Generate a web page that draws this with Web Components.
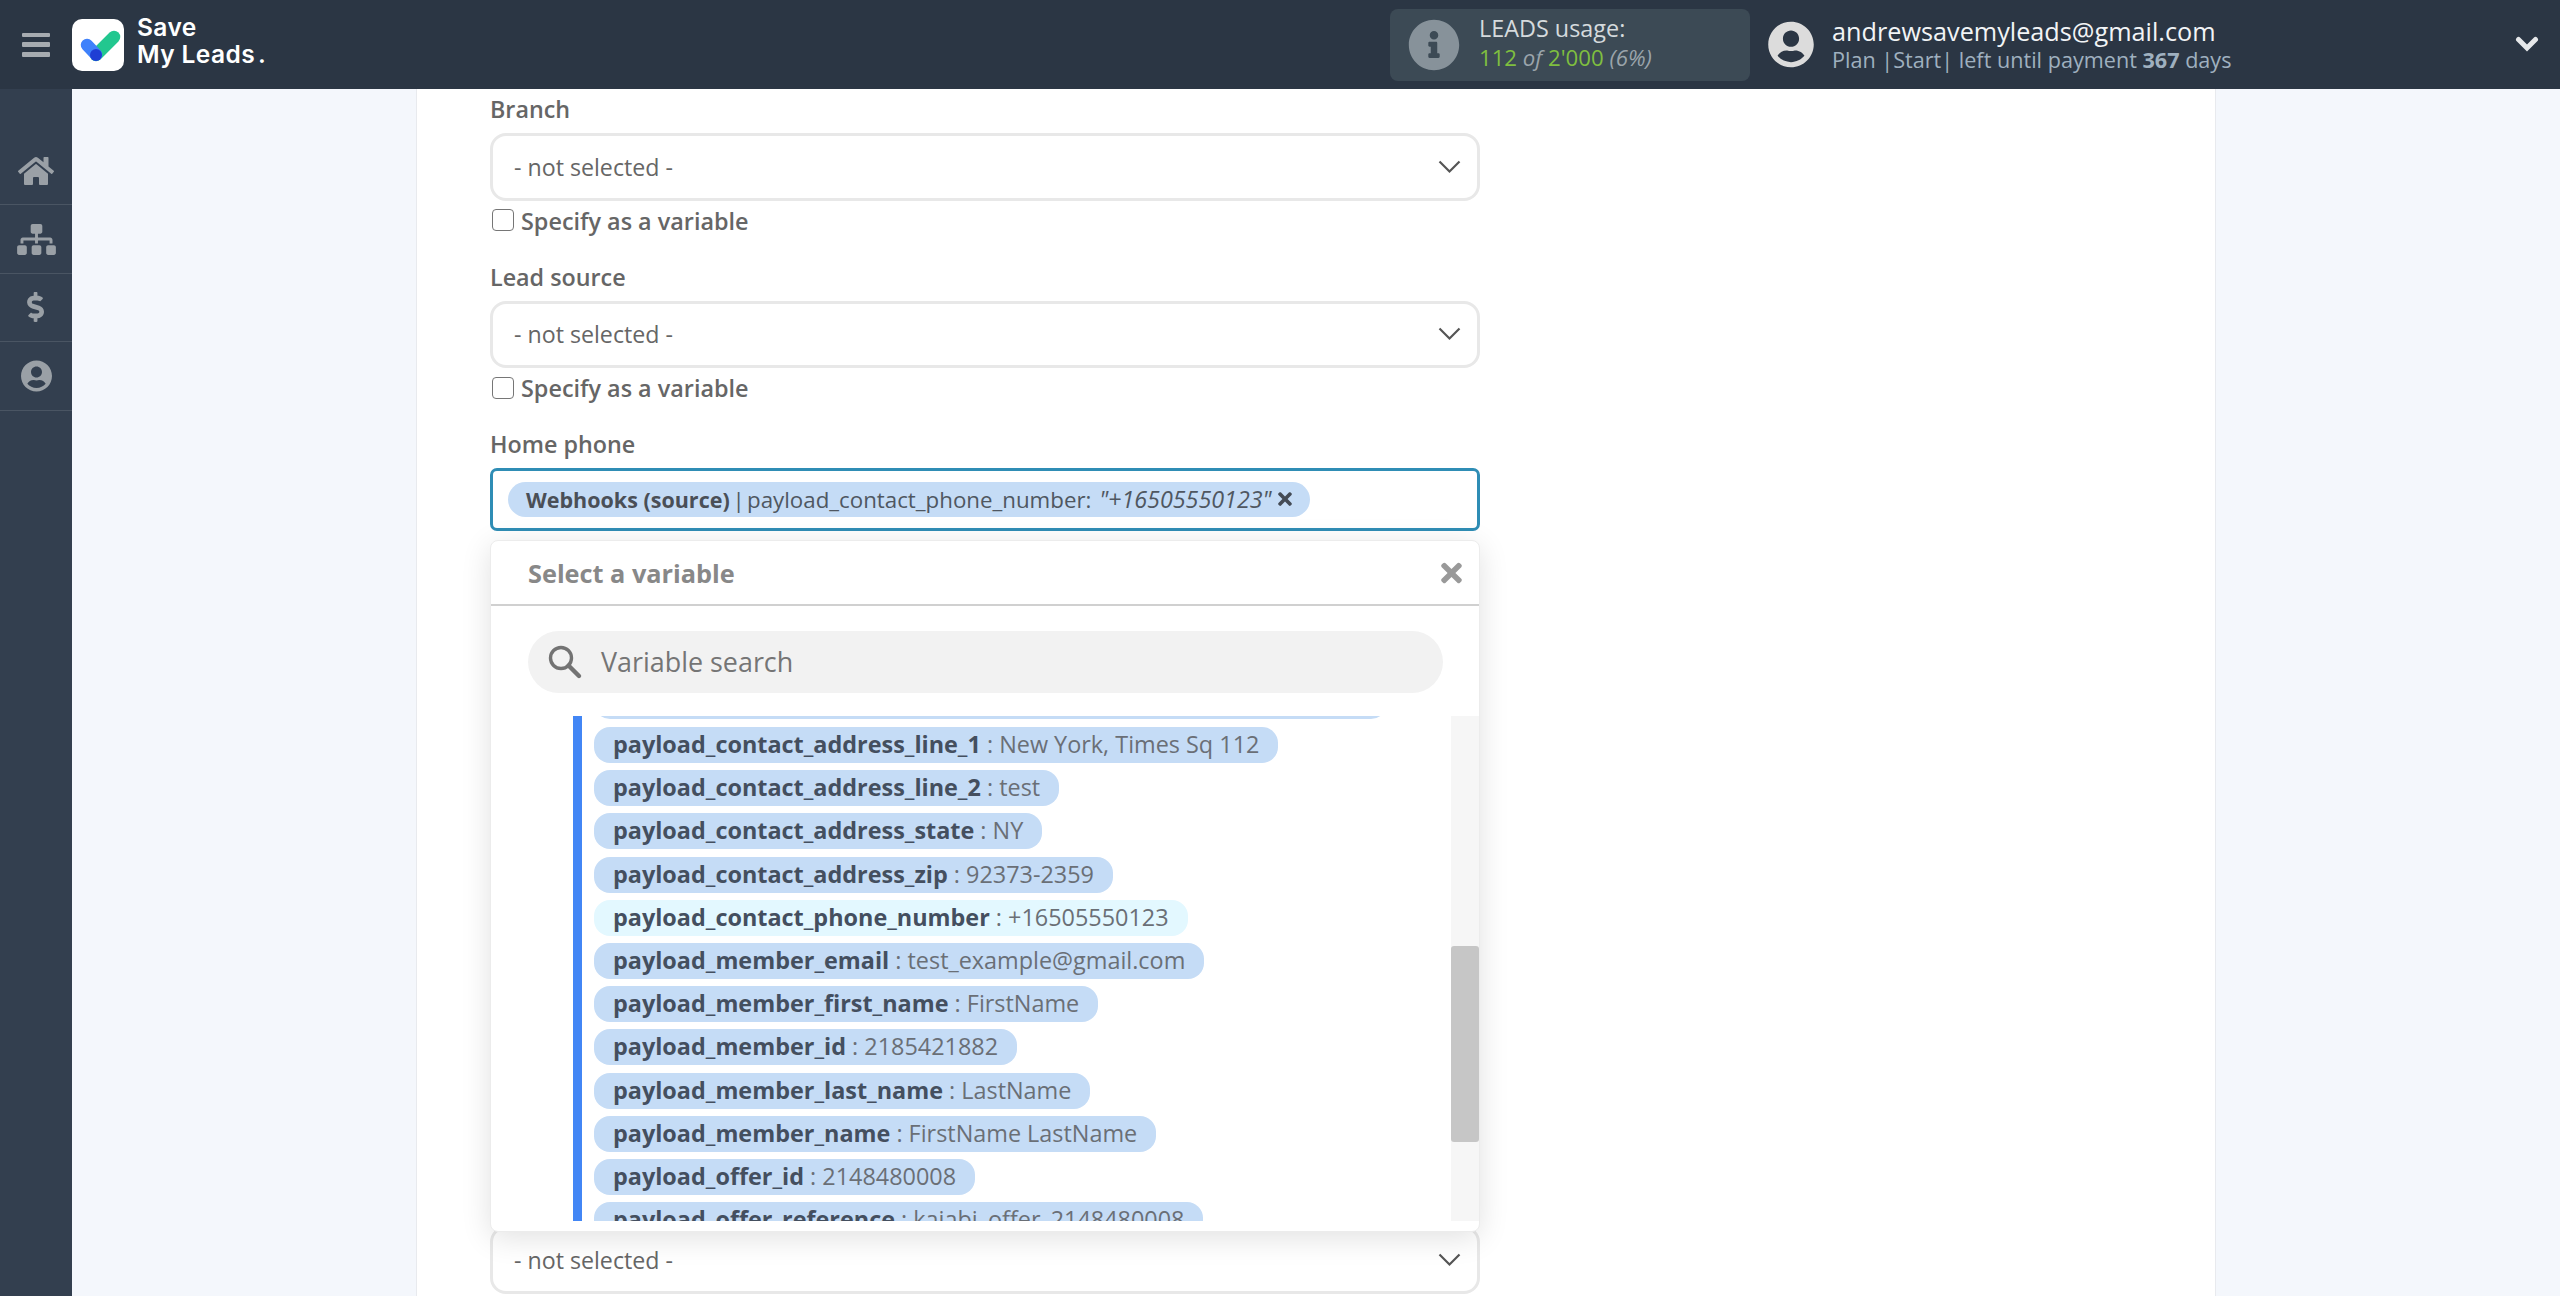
<!DOCTYPE html>
<html><head><meta charset="utf-8"><title>Save My Leads</title>
<style>
html,body{margin:0;padding:0;height:1296px;overflow:hidden;background:#f4f7fc;font-family:"Open Sans","Liberation Sans",sans-serif}
</style></head>
<body>
<sml-app>
  <sml-header slot="header"></sml-header>
  <sml-sidebar slot="side"></sml-sidebar>
  <sml-card slot="main">
    <sml-field label="Branch" check></sml-field>
    <sml-field label="Lead source" check></sml-field>
    <sml-field label="Home phone" mode="variable"></sml-field>
    <sml-select class="last"></sml-select>
  </sml-card>
</sml-app>
<script>
const P={
home:['0 0 576 512','M280.37 148.26L96 300.11V464a16 16 0 0 0 16 16l112.06-.29a16 16 0 0 0 15.92-16V368a16 16 0 0 1 16-16h64a16 16 0 0 1 16 16v95.64a16 16 0 0 0 16 16.05L464 480a16 16 0 0 0 16-16V300L295.67 148.26a12.19 12.19 0 0 0-15.3 0zM571.6 251.47L488 182.56V44.05a12 12 0 0 0-12-12h-56a12 12 0 0 0-12 12v72.61L318.47 43a48 48 0 0 0-61 0L4.34 251.47a12 12 0 0 0-1.6 16.9l25.5 31A12 12 0 0 0 45.15 301l235.22-193.74a12.19 12.19 0 0 1 15.3 0L530.9 301a12 12 0 0 0 16.9-1.6l25.5-31a12 12 0 0 0-1.7-16.93z'],
sitemap:['0 0 640 512','M128 352H32c-17.67 0-32 14.33-32 32v96c0 17.67 14.33 32 32 32h96c17.67 0 32-14.33 32-32v-96c0-17.67-14.33-32-32-32zm-24-80h192v48h48v-48h192v48h48v-57.59c0-21.17-17.23-38.41-38.41-38.41H344v-64h40c17.67 0 32-14.33 32-32V32c0-17.67-14.33-32-32-32H256c-17.67 0-32 14.33-32 32v96c0 17.67 14.33 32 32 32h40v64H94.41C73.23 224 56 241.23 56 262.41V320h48v-48zm264 80h-96c-17.67 0-32 14.33-32 32v96c0 17.67 14.33 32 32 32h96c17.67 0 32-14.33 32-32v-96c0-17.67-14.33-32-32-32zm240 0h-96c-17.67 0-32 14.33-32 32v96c0 17.67 14.33 32 32 32h96c17.67 0 32-14.33 32-32v-96c0-17.67-14.33-32-32-32z'],
dollar:['0 0 320 512','M209.2 233.4l-108-31.6C88.7 198.2 80 186.5 80 173.5c0-16.3 13.2-29.5 29.5-29.5h66.3c12.2 0 24.2 3.7 34.2 10.5 6.1 4.1 14.3 3.1 19.5-2l34.8-34c7.1-6.9 6.1-18.4-1.8-24.5C238 74.8 207.4 64.1 176 64V16c0-8.8-7.2-16-16-16h-32c-8.8 0-16 7.2-16 16v48h-2.5C45.8 64-5.4 118.7.5 183.6c4.2 46.1 39.4 83.6 83.8 96.6l102.5 30c12.5 3.7 21.2 15.3 21.2 28.3 0 16.3-13.2 29.5-29.5 29.5h-66.3C100 368 88 364.3 78 357.5c-6.1-4.1-14.3-3.1-19.5 2l-34.8 34c-7.1 6.9-6.1 18.4 1.8 24.5 24.5 19.2 55.1 29.9 86.5 30v48c0 8.8 7.2 16 16 16h32c8.8 0 16-7.2 16-16v-48.2c46.6-.9 90.3-28.6 105.7-72.7 21.5-61.6-14.6-124.8-72.5-141.7z'],
user:['0 0 496 512','M248 8C111 8 0 119 0 256s111 248 248 248 248-111 248-248S385 8 248 8zm0 96c48.6 0 88 39.4 88 88s-39.4 88-88 88-88-39.4-88-88 39.4-88 88-88zm0 344c-58.7 0-111.3-26.6-146.5-68.2 18.8-35.4 55.6-59.8 98.5-59.8 2.4 0 4.8.4 7.1 1.1 13 4.2 26.6 6.9 40.9 6.9 14.3 0 28-2.7 40.9-6.9 2.3-.7 4.7-1.1 7.1-1.1 42.9 0 79.7 24.4 98.5 59.8C359.3 421.4 306.7 448 248 448z'],
info:['0 0 512 512','M256 8C119.043 8 8 119.083 8 256c0 136.997 111.043 248 248 248s248-111.003 248-248C504 119.083 392.957 8 256 8zm0 110c23.196 0 42 18.804 42 42s-18.804 42-42 42-42-18.804-42-42 18.804-42 42-42zm56 254c0 6.627-5.373 12-12 12h-88c-6.627 0-12-5.373-12-12v-24c0-6.627 5.373-12 12-12h12v-64h-12c-6.627 0-12-5.373-12-12v-24c0-6.627 5.373-12 12-12h64c6.627 0 12 5.373 12 12v100h12c6.627 0 12 5.373 12 12v24z'],
times:['0 0 352 512','M242.72 256l100.07-100.07c12.28-12.28 12.28-32.19 0-44.48l-22.24-22.24c-12.28-12.28-32.19-12.28-44.48 0L176 189.28 75.93 89.21c-12.28-12.28-32.19-12.28-44.48 0L9.21 111.45c-12.28 12.28-12.28 32.19 0 44.48L109.28 256 9.21 356.07c-12.28 12.28-12.28 32.19 0 44.48l22.24 22.24c12.28 12.28 32.2 12.28 44.48 0L176 322.72l100.07 100.07c12.28 12.28 32.2 12.28 44.48 0l22.24-22.24c12.28-12.28 12.28-32.19 0-44.48L242.72 256z']
};
const ico=(n,w,h,c)=>`<svg width="${w}" height="${h}" viewBox="${P[n][0]}" fill="${c}" style="display:block;flex:none"><path d="${P[n][1]}"/></svg>`;
function def(name,html){
  customElements.define(name,class extends HTMLElement{
    constructor(){super();this.attachShadow({mode:'open'});}
    connectedCallback(){this.shadowRoot.innerHTML=typeof html==='function'?html(this):html;}
  });
}
def('sml-app',`<style>
:host{display:grid;grid-template-columns:72px 1fr;grid-template-rows:89px 1207px;height:1296px;overflow:hidden}
.h{grid-column:1/3}
.m{padding-left:344px;min-width:0;overflow:hidden}
</style><div class="h"><slot name="header"></slot></div><slot name="side"></slot><div class="m"><slot name="main"></slot></div>`);

def('sml-header',`<style>
:host{display:flex;align-items:center;height:89px;background:#2b3644;color:#fff;font-family:"Open Sans",sans-serif;position:relative}
.burger{margin-left:22px;width:28px;height:24px;display:flex;flex-direction:column;justify-content:space-between}
.burger i{display:block;height:4.5px;background:#a6abb0;border-radius:1px}
.logo{margin-left:22px;width:52px;height:52px;background:#fff;border-radius:10px;flex:none}
.brand{margin-left:13px;font:600 24.5px/27px Inter,"Open Sans",sans-serif;color:#fff;letter-spacing:.4px;width:190px;padding-bottom:7px}
.brand b{font-weight:600;display:block}
.usage{margin-left:auto;width:360px;height:72px;background:#3c4a55;border-radius:8px;display:flex;align-items:center;box-sizing:border-box;padding-left:18px;gap:19px}
.usage .t{font-size:23.4px;line-height:29px;color:#d5dadd;margin-top:-3px}
.l2{font-size:22.2px}
.g{color:#7fbf3f}.o{font-style:italic;color:#9aa4ab}
.user{margin-left:18px;display:flex;align-items:center;gap:18px;width:792px}
.u{font-size:25.24px;line-height:29px;color:#f2f4f6;margin-top:-1px}
.s{font-size:21.62px;line-height:27px;color:#9fb0bf;margin-bottom:-1px}
.s b{font-weight:700}
.chev{position:absolute;right:21px;top:36px}
</style>
<div class="burger"><i></i><i></i><i></i></div>
<div class="logo"><svg width="52" height="52" viewBox="0 0 52 52"><path d="M42 18 24 36" stroke="#22c78f" stroke-width="12.5" stroke-linecap="round" fill="none"/><path d="M15 26 24 35.5" stroke="#3f81fb" stroke-width="12.5" stroke-linecap="round" fill="none"/><circle cx="24" cy="36" r="6" fill="#1f3ed4"/></svg></div>
<div class="brand"><b>Save</b><b>My Leads<span style="margin-left:3px">.</span></b></div>
<div class="usage">${ico('info',52,52,'#87929a')}<div class="t"><div>LEADS usage:</div><div class="l2"><span class="g">112</span> <span class="o">of</span> <span class="g">2'000</span> <span class="o">(6%)</span></div></div></div>
<div class="user">${ico('user',46,47,'#dcdcdc')}<div><div class="u">andrewsavemyleads@gmail.com</div><div class="s">Plan |Start| left until payment <b>367</b> days</div></div></div>
<svg class="chev" width="24" height="16" viewBox="0 0 24 16"><path d="M3.5 3.5 12 12 20.5 3.5" stroke="#e6e8ea" stroke-width="5" stroke-linecap="round" fill="none"/></svg>`);

def('sml-sidebar',`<style>
:host{display:block;background:#333f4f;padding-top:48px;box-sizing:border-box;height:1207px}
.r{height:68.4px;box-sizing:border-box;border-bottom:1.5px solid #4a5563;display:flex;align-items:center;justify-content:center}
</style>
<div class="r">${ico('home',36,32,'#9aa0a6')}</div>
<div class="r">${ico('sitemap',39,31,'#9aa0a6')}</div>
<div class="r">${ico('dollar',19,30,'#9aa0a6')}</div>
<div class="r">${ico('user',31,32,'#9aa0a6')}</div>`);

def('sml-card',`<style>
:host{display:block;width:1800px;height:1207px;box-sizing:border-box;background:#fff;border-left:1px solid #e8eaee;border-right:1px solid #e8eaee;padding:3px 0 0 73px;overflow:hidden;font-family:"Open Sans",sans-serif}
.f{width:990px;position:relative}
::slotted(.last){margin-top:695px}
</style><div class="f"><slot></slot></div>`);

def('sml-select',`<style>
:host{display:block;height:67.5px;box-sizing:border-box;border:3px solid #e8e8e8;border-radius:16px;background:#fff;font-family:"Open Sans",sans-serif}
.i{display:flex;align-items:center;height:100%;padding:0 16px 0 21px;font-size:23.2px;color:#666}
svg{margin-left:auto}
</style><div class="i"><span>- not selected -</span><svg width="23" height="14" viewBox="0 0 23 14"><path d="M1.5 1.5 11.5 11.5 21.5 1.5" stroke="#555" stroke-width="2.2" fill="none"/></svg></div>`);

def('sml-checkbox',`<style>
:host{display:flex;align-items:center;height:42px;gap:7px;padding-left:2px;font-family:"Open Sans",sans-serif;font-size:23.4px;font-weight:600;color:#666}
i{display:block;width:22px;height:22px;box-sizing:border-box;border:1.8px solid #767676;border-radius:4px;background:#fff;margin-top:-3px}
span{margin-top:-1.5px}
</style><i></i><span><slot></slot></span>`);

def('sml-field',e=>{
  const v=e.getAttribute('mode')==='variable';
  return `<style>
:host{display:block;margin-bottom:17px;font-family:"Open Sans",sans-serif}
.l{font-size:23.3px;font-weight:600;color:#666;line-height:35px;margin-bottom:6px}
.box{height:63px;box-sizing:border-box;border:3px solid #2f8db5;border-radius:7px;background:#fff;display:flex;align-items:center;padding-left:15px}
.d{position:absolute;left:0;top:448px;z-index:2}
</style>
<div class="l">${e.getAttribute('label')}</div>
${v?`<div class="box"><sml-tag></sml-tag></div><sml-dropdown class="d"></sml-dropdown>`:`<sml-select></sml-select>`}
${e.hasAttribute('check')?`<sml-checkbox>Specify as a variable</sml-checkbox>`:''}`;
});

def('sml-tag',`<style>
:host{display:flex;align-items:center;height:35px;padding:0 18px;background:#c5dcf6;border-radius:17.5px;font-size:22.3px;color:#4f5761;white-space:nowrap;font-family:"Open Sans",sans-serif}
span{margin-top:-2px}
b{font-weight:700;color:#4a4f57;font-size:21.5px}
i{font-style:normal;margin:0 -3.5px 0 -3px}
em{color:#4f5761;margin-left:2px;font-size:23.3px}
svg{margin-left:6px;margin-top:-2px}
</style><span><b>Webhooks (source)</b> <i>|</i> payload_contact_phone_number: <em>"+16505550123"</em></span>${ico('times',14,20,'#444b55').replace('display:block;','')}`);

def('sml-var',`<style>
:host{display:table;height:36px;box-sizing:border-box;margin-bottom:7.2px;padding:0 19px;line-height:35px;background:var(--bg,#c5dcf6);border-radius:16px;font-size:23.4px;color:#6a6f76;white-space:nowrap;font-family:"Open Sans",sans-serif}
b{font-weight:700;color:#444f5f}
</style><span><b><slot name="k"></slot></b> : <slot name="v"></slot></span>`);

const rows=[['payload_contact_address_line_1','New York, Times Sq 112'],['payload_contact_address_line_2','test'],['payload_contact_address_state','NY'],['payload_contact_address_zip','92373-2359'],['payload_contact_phone_number','+16505550123',1],['payload_member_email','test_example@gmail.com'],['payload_member_first_name','FirstName'],['payload_member_id','2185421882'],['payload_member_last_name','LastName'],['payload_member_name','FirstName LastName'],['payload_offer_id','2148480008'],['payload_offer_reference','kajabi_offer_2148480008']];
def('sml-dropdown',`<style>
:host{display:block;width:990px;height:692px;box-sizing:border-box;background:#fff;border:1px solid #ececec;border-radius:8px;box-shadow:0 6px 30px rgba(0,0,0,.12);font-family:"Open Sans",sans-serif}
.top{height:65px;box-sizing:border-box;border-bottom:2px solid #d0d0d0;display:flex;align-items:center;justify-content:space-between;padding:0 17px 0 37px;font-size:25.3px;font-weight:700;color:#888}
.search{margin:25px 36px 0 37px;height:62px;border-radius:31px;background:#f2f2f2;display:flex;align-items:center;padding-left:19px;gap:18px;font-size:26.9px;color:#757575}
.search span{margin-top:-1px}
.body{display:flex;margin:23px 0 0 82px;height:505px}
.list{flex:1;border-left:9px solid #4286f5;overflow:hidden;padding-left:12px;--bg:#c5dcf6}
.cut{width:793px;height:36px;margin:-33px 0 8px;background:#c5dcf6;border-radius:16px}
.track{width:28px;background:#f6f6f6;padding-top:230px;box-sizing:border-box}
.thumb{height:196px;background:#c6c6c6;border-radius:3px}
.hl{--bg:#e3f8ff}
</style>
<div class="top"><span>Select a variable</span>${ico('times',21,30,'#999')}</div>
<div class="search"><svg width="36" height="36" viewBox="0 0 36 36" fill="none" stroke="#737373" stroke-width="3.4"><circle cx="14" cy="14" r="10.5"/><path d="M21.5 21.5 32 32" stroke-width="4.4" stroke-linecap="round"/></svg><span>Variable search</span></div>
<div class="body"><div class="list"><div class="cut"></div>${rows.map(r=>`<sml-var${r[2]?' class="hl"':''}><span slot="k">${r[0]}</span><span slot="v">${r[1]}</span></sml-var>`).join('')}</div><div class="track"><div class="thumb"></div></div></div>`);
</script>
</body></html>
